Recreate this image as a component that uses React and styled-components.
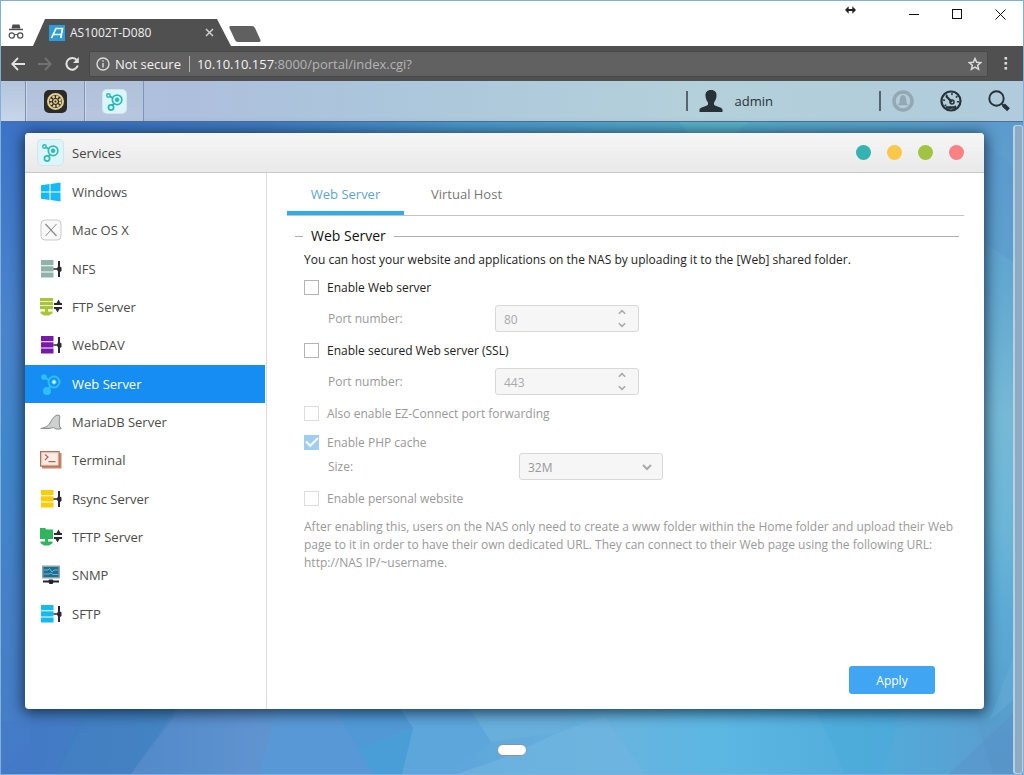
import { useState } from 'react';
import styled, { createGlobalStyle } from 'styled-components';

const services = [
  { name: 'Windows', icon: <WindowsIcon /> },
  { name: 'Mac OS X', icon: <MacIcon /> },
  { name: 'NFS', icon: <RackIcon color="#8fb3a9" /> },
  { name: 'FTP Server', icon: <TransferIcon color="#a9c438" /> },
  { name: 'WebDAV', icon: <RackIcon color="#7719aa" /> },
  { name: 'Web Server', icon: <NodesIcon color="#2cc0fb" size={22} filled /> },
  { name: 'MariaDB Server', icon: <SealIcon /> },
  { name: 'Terminal', icon: <TerminalIcon /> },
  { name: 'Rsync Server', icon: <RackIcon color="#f8cd0c" /> },
  { name: 'TFTP Server', icon: <TransferIcon color="#2fb55d" folder /> },
  { name: 'SNMP', icon: <MonitorIcon /> },
  { name: 'SFTP', icon: <RackIcon color="#18b9f2" /> },
];

function App() {
  const [service, setService] = useState('Web Server');
  const [tab, setTab] = useState('Web Server');
  const [checks, setChecks] = useState({ http: false, ssl: false });

  const handleCheck = (e) => {
    const { name, checked } = e.target;
    setChecks({
      ...checks,
      [name]: checked,
    });
  };

  return (
    <StBrowser>
      <GlobalStyle />
      <BrowserHeader />
      <TopBar />
      <StDesktop>
        <Wallpaper />
        <StWindow>
          <StWindowHeader>
            <StTile size={25}>
              <NodesIcon color="#35b9b4" size={19} />
            </StTile>
            <StWindowTitle>Services</StWindowTitle>
            <StDot type="button" color="#33b3b1" aria-label="Help" />
            <StDot type="button" color="#fac748" aria-label="Minimize" />
            <StDot type="button" color="#a1c440" aria-label="Maximize" />
            <StDot type="button" color="#fa8083" aria-label="Close" />
          </StWindowHeader>
          <StWindowBody>
            <StSidebar>
              {services.map(({ name, icon }) => (
                <li key={name}>
                  <StService
                    type="button"
                    $active={name === service}
                    onClick={() => setService(name)}
                  >
                    {icon}
                    {name}
                  </StService>
                </li>
              ))}
            </StSidebar>
            <StContent>
              <StTabs role="tablist">
                {['Web Server', 'Virtual Host'].map((name) => (
                  <StTab
                    key={name}
                    type="button"
                    role="tab"
                    aria-selected={name === tab}
                    $active={name === tab}
                    onClick={() => setTab(name)}
                  >
                    {name}
                  </StTab>
                ))}
              </StTabs>
              <StSection>
                <StSectionTitle>Web Server</StSectionTitle>
                <StForm id="webServer" onSubmit={(e) => e.preventDefault()}>
                  <StText>
                    You can host your website and applications on the NAS by uploading it to the
                    [Web] shared folder.
                  </StText>
                  <StCheckRow>
                    <StCheck
                      type="checkbox"
                      name="http"
                      checked={checks.http}
                      onChange={handleCheck}
                    />
                    Enable Web server
                  </StCheckRow>
                  <PortField id="httpPort" port="80" disabled={!checks.http} />
                  <StCheckRow>
                    <StCheck
                      type="checkbox"
                      name="ssl"
                      checked={checks.ssl}
                      onChange={handleCheck}
                    />
                    Enable secured Web server (SSL)
                  </StCheckRow>
                  <PortField id="sslPort" port="443" disabled={!checks.ssl} />
                  <StCheckRow $disabled>
                    <StCheck type="checkbox" disabled />
                    Also enable EZ-Connect port forwarding
                  </StCheckRow>
                  <StCheckRow $disabled $compact>
                    <StCheck type="checkbox" defaultChecked disabled />
                    Enable PHP cache
                  </StCheckRow>
                  <StField $labelWidth={191}>
                    <label htmlFor="cacheSize">Size:</label>
                    <StControl>
                      <StSelect id="cacheSize" disabled>
                        <option>32M</option>
                      </StSelect>
                      <StSelectArrow viewBox="0 0 12 8">
                        <path d="M2 2l4 4 4-4" />
                      </StSelectArrow>
                    </StControl>
                  </StField>
                  <StCheckRow $disabled>
                    <StCheck type="checkbox" disabled />
                    Enable personal website
                  </StCheckRow>
                  <StText $disabled>
                    After enabling this, users on the NAS only need to create a www folder within
                    the Home folder and upload their Web page to it in order to have their own
                    dedicated URL. They can connect to their Web page using the following URL:
                    http://NAS IP/~username.
                  </StText>
                </StForm>
              </StSection>
              <StApply type="submit" form="webServer">
                Apply
              </StApply>
            </StContent>
          </StWindowBody>
        </StWindow>
        <StScrollbar />
        <StPager type="button" aria-label="Page 1" />
      </StDesktop>
    </StBrowser>
  );
}

export default App;

function BrowserHeader() {
  return (
    <>
      <StTitleBar>
        <StIncognito viewBox="0 0 16 18">
          <path d="M4.5 1.5h7l1 4h-9z" fill="#4c4c4c" />
          <path d="M1 6.5h14" stroke="#4c4c4c" strokeWidth="1.4" />
          <g fill="none" stroke="#4c4c4c" strokeWidth="1.2">
            <circle cx="3.8" cy="12.5" r="2.6" />
            <circle cx="12.2" cy="12.5" r="2.6" />
            <path d="M6.4 12q1.6-1 3.2 0" />
          </g>
        </StIncognito>
        <StBrowserTab>
          <svg width="16" height="16" viewBox="0 0 16 16">
            <rect width="16" height="16" fill="#2a9ddf" />
            <path
              d="M2.5 13L7 3.5h6.5L11.8 13M4.5 9.5h7.5"
              fill="none"
              stroke="#fff"
              strokeWidth="1.7"
            />
          </svg>
          <StTabName>AS1002T-D080</StTabName>
          <StIconButton type="button" aria-label="Close tab">
            <svg width="9" height="9" viewBox="0 0 9 9" stroke="#d0d0d0" strokeWidth="1.5">
              <path d="M1 1l7 7M8 1L1 8" />
            </svg>
          </StIconButton>
        </StBrowserTab>
        <StNewTab type="button" aria-label="New tab">
          <svg width="32" height="16" viewBox="0 0 32 16">
            <path d="M1.5 0H23q2 0 3 2l5.5 12q.5 2-1.500 2H9q-2 0-3-2L.5 2Q0 0 1.500 0z" fill="#606060" />
          </svg>
        </StNewTab>
        <StWindowButtons>
          <svg width="11" height="8" viewBox="0 0 12 8">
            <path d="M0 4l4-4v3h4V0l4 4-4 4V5H4v3z" fill="#222" />
          </svg>
          <StIconButton type="button" aria-label="Minimize window">
            <svg width="11" height="11" viewBox="0 0 11 11" stroke="#111">
              <path d="M0 5.5h10" />
            </svg>
          </StIconButton>
          <StIconButton type="button" aria-label="Maximize window">
            <svg width="11" height="11" viewBox="0 0 11 11" stroke="#111" fill="none">
              <rect x=".5" y=".5" width="9" height="9" />
            </svg>
          </StIconButton>
          <StIconButton type="button" aria-label="Close window">
            <svg width="11" height="11" viewBox="0 0 11 11" stroke="#111">
              <path d="M.5 .5l10 10M10.5 .5l-10 10" />
            </svg>
          </StIconButton>
        </StWindowButtons>
      </StTitleBar>
      <StToolbar>
        <StIconButton type="button" aria-label="Back">
          <svg width="14" height="14" viewBox="0 0 14 14" stroke="#e2e2e2" strokeWidth="1.8" fill="none">
            <path d="M14 7H1.5M7 1L1.2 7 7 13" />
          </svg>
        </StIconButton>
        <StIconButton type="button" aria-label="Forward">
          <svg width="14" height="14" viewBox="0 0 14 14" stroke="#727272" strokeWidth="1.8" fill="none">
            <path d="M0 7h12.5M7 1l5.8 6L7 13" />
          </svg>
        </StIconButton>
        <StIconButton type="button" aria-label="Reload">
          <svg width="14" height="14" viewBox="0 0 14 14" stroke="#e2e2e2" strokeWidth="2" fill="none">
            <path d="M12 3.5A5.8 5.8 0 1 0 12.8 8.5" />
            <path d="M13.8 0v6H8z" fill="#e2e2e2" stroke="none" />
          </svg>
        </StIconButton>
        <StAddress>
          <svg width="14" height="14" viewBox="0 0 14 14" stroke="#dcdcdc" strokeWidth="1.4" fill="none">
            <circle cx="7" cy="7" r="6" />
            <path d="M7 6v4.5M7 3.3v1.5" />
          </svg>
          <StSecure>Not secure</StSecure>
          <StUrl>
            <b>10.10.10.157</b>:8000/portal/index.cgi?
          </StUrl>
          <StIconButton type="button" aria-label="Bookmark">
            <svg width="14" height="14" viewBox="0 0 14 14" stroke="#dcdcdc" strokeWidth="1.5" fill="none">
              <path d="M7 1.5l1.7 3.7 4 .4-3 2.7.9 4L7 10.2l-3.6 2.100.9-4-3-2.7 4-.4z" />
            </svg>
          </StIconButton>
        </StAddress>
        <StIconButton type="button" aria-label="Menu">
          <svg width="4" height="13" viewBox="0 0 4 13" fill="#dcdcdc">
            <rect x=".5" width="2.6" height="2.6" />
            <rect x=".5" y="5" width="2.6" height="2.6" />
            <rect x=".5" y="10" width="2.6" height="2.6" />
          </svg>
        </StIconButton>
      </StToolbar>
    </>
  );
}

function TopBar() {
  return (
    <StTopBar>
      <StShowDesktop type="button" aria-label="Show desktop" />
      <StTask type="button" aria-label="Settings">
        <svg width="23" height="23" viewBox="0 0 23 23" fill="none">
          <rect width="23" height="23" rx="5" fill="#2c2a26" />
          <circle cx="11.5" cy="11.5" r="7.5" stroke="#e3cf93" strokeWidth="2" />
          <circle cx="11.5" cy="11.5" r="4.8" stroke="#e3cf93" strokeWidth="2.4" strokeDasharray="2.4 1.37" />
          <circle cx="11.5" cy="11.5" r="2.4" fill="#e3cf93" />
          <circle cx="11.5" cy="11.5" r="1" fill="#2c2a26" />
        </svg>
      </StTask>
      <StTask type="button" aria-label="Services">
        <StTile size={23}>
          <NodesIcon color="#28b9b4" size={19} />
        </StTile>
      </StTask>
      <StUser type="button">
        <svg width="24" height="22" viewBox="0 0 24 22">
          <path
            d="M12 0c4 0 5.8 2.5 5.5 6-.2 3-1.3 5-2.5 6.500v2c1 2 7.5 2 8.5 5V22H.5v-2.500c1-3 7.5-3 8.500-5v-2C7.8 11 6.7 9 6.5 6 6.2 2.5 8 0 12 0z"
            fill="#263238"
          />
        </svg>
        admin
      </StUser>
      <StTools>
        <StIconButton type="button" aria-label="Notifications">
          <svg width="22" height="22" viewBox="0 0 22 22" fill="none">
            <circle cx="11" cy="11" r="9" stroke="#93a8b2" strokeWidth="3.5" />
            <path d="M11 5c2.2 0 3 2.2 3.2 4.5L14.5 13l2 2.200h-11L7.5 13l.3-3.500C8 7.2 8.8 5 11 5z" fill="#93a8b2" />
          </svg>
        </StIconButton>
        <StIconButton type="button" aria-label="Activity monitor">
          <svg width="22" height="22" viewBox="0 0 22 22" fill="none" stroke="#263238">
            <circle cx="11" cy="11" r="9.5" strokeWidth="2.2" />
            <circle cx="11" cy="11" r="7" strokeWidth="2" strokeDasharray="1.5 4" />
            <path d="M6 6l6 6" strokeWidth="2.2" />
            <circle cx="12" cy="12" r="2" strokeWidth="1.5" />
            <path d="M6 17.5h10" strokeWidth="2.5" />
          </svg>
        </StIconButton>
        <StIconButton type="button" aria-label="Search">
          <svg width="22" height="22" viewBox="0 0 22 22" fill="none" stroke="#263238">
            <circle cx="8.5" cy="8.5" r="7.2" strokeWidth="1.9" />
            <path d="M14 14l2 2" strokeWidth="2" />
            <path d="M15.5 15l5 4.8" strokeWidth="4" />
          </svg>
        </StIconButton>
      </StTools>
    </StTopBar>
  );
}

function PortField({ id, port, disabled }) {
  const [value, setValue] = useState(port);

  return (
    <StField $labelWidth={167}>
      <label htmlFor={id}>Port number:</label>
      <StControl>
        <StInput
          id={id}
          type="text"
          value={value}
          onChange={(e) => setValue(e.target.value)}
          disabled={disabled}
        />
        <StSpinner>
          <button
            type="button"
            aria-label="Increase"
            disabled={disabled}
            onClick={() => setValue(String(Number(value) + 1))}
          >
            <svg width="8" height="6" viewBox="0 0 8 6">
              <path d="M.8 4.8L4 1.6l3.2 3.2" />
            </svg>
          </button>
          <button
            type="button"
            aria-label="Decrease"
            disabled={disabled}
            onClick={() => setValue(String(Number(value) - 1))}
          >
            <svg width="8" height="6" viewBox="0 0 8 6">
              <path d="M.8 1.2L4 4.4l3.2-3.2" />
            </svg>
          </button>
        </StSpinner>
      </StControl>
    </StField>
  );
}

function Wallpaper() {
  return (
    <StWallpaper viewBox="0 0 1024 653" preserveAspectRatio="none">
      <defs>
        <linearGradient id="sky" x1="0" x2="1" y1="0" y2="0">
          <stop offset="0" stopColor="#4379c6" />
          <stop offset=".15" stopColor="#4785c5" />
          <stop offset=".25" stopColor="#5c94d0" />
          <stop offset=".45" stopColor="#5ea6db" />
          <stop offset=".6" stopColor="#67b4df" />
          <stop offset=".7" stopColor="#5cb7e3" />
          <stop offset=".85" stopColor="#51acdb" />
          <stop offset="1" stopColor="#5c9bcd" />
        </linearGradient>
        <linearGradient id="topEdge" x1="0" x2="1" y1="0" y2="0">
          <stop offset="0" stopColor="#3a70c4" />
          <stop offset=".25" stopColor="#3f7ac0" />
          <stop offset=".45" stopColor="#4c98cb" />
          <stop offset=".7" stopColor="#55acc9" />
          <stop offset="1" stopColor="#5c9bcd" />
        </linearGradient>
        <linearGradient id="leftEdge" x1="0" x2="0" y1="0" y2="1">
          <stop offset="0" stopColor="#3c73c6" />
          <stop offset=".3" stopColor="#4a83cc" />
          <stop offset=".5" stopColor="#3f86cb" />
          <stop offset=".75" stopColor="#4780c6" />
          <stop offset="1" stopColor="#457cc8" />
        </linearGradient>
        <linearGradient id="rightEdge" x1="0" x2="0" y1="0" y2="1">
          <stop offset="0" stopColor="#5c9bcd" />
          <stop offset=".25" stopColor="#62a8d0" />
          <stop offset=".45" stopColor="#76b9d6" />
          <stop offset=".62" stopColor="#6cb5d7" />
          <stop offset=".75" stopColor="#5caad5" />
          <stop offset="1" stopColor="#5598c9" />
        </linearGradient>
      </defs>
      <rect width="1024" height="653" fill="url(#sky)" />
      <path d="M0 0h1024v30H0z" fill="url(#topEdge)" />
      <path d="M0 0h30v620L0 653z" fill="url(#leftEdge)" />
      <path d="M680 0h70l-20 14h-40z" fill="#5cb8c8" opacity=".6" />
      <path d="M975 0h49v653h-30l-19-60z" fill="url(#rightEdge)" />
      <path d="M980 15l34 30v95l-30-20z" fill="#5b96cd" opacity=".4" />
      <path d="M990 600l34-90v60z" fill="#6fb6dd" opacity=".3" />
      <path d="M0 600h85L55 653H0z" fill="#4377c6" opacity=".4" />
      <path d="M85 580h95l-50 73H55z" fill="#3f80bd" opacity=".4" />
      <path d="M185 580h95l-21 73H130z" fill="#6492d0" opacity=".45" />
      <path d="M277 585h57l39 68H259z" fill="#5898d6" />
      <path d="M334 585h64l15 22-56 21z" fill="#5099d6" />
      <path d="M413 607l-11 46h-29l-16-25z" fill="#4a9ed8" />
      <path d="M398 585h70l23 36-45 32h-44l11-46z" fill="#5da6dc" />
      <path d="M468 585h110l-18 26-69 10z" fill="#68afdc" />
      <path d="M500 638l60-27 45-16 40 58H457z" fill="#70b5df" opacity=".7" />
      <path d="M815 585h88l-20 68h-38z" fill="#48a9d9" opacity=".4" />
      <path d="M950 653l74-70v70z" fill="#5b8fc9" opacity=".4" />
    </StWallpaper>
  );
}

function WindowsIcon() {
  return (
    <svg width="22" height="22" viewBox="0 0 22 22" fill="#16b8f5">
      <path d="M1 4.3l8.5-1.3v7.5H1zM10.5 2.9L20.5 1.5v9h-10zM1 11.5h8.5V19L1 17.7zM10.5 11.5h10v9l-10-1.4z" />
    </svg>
  );
}

function MacIcon() {
  return (
    <svg width="22" height="22" viewBox="0 0 22 22" fill="none">
      <rect x="1" y="1" width="20" height="20" rx="4" fill="#f8f8f8" stroke="#c9c9c9" />
      <path d="M5.5 5l11 12" stroke="#8d8d8d" strokeWidth="1.3" />
      <path d="M16.5 5l-11 12" stroke="#8d8d8d" strokeWidth="1" />
    </svg>
  );
}

function RackIcon({ color }) {
  return (
    <svg width="22" height="22" viewBox="0 0 22 22">
      <path d="M1 2h12.5v5.2H1zM1 8.2h12.5v5.2H1zM1 14.4h12.5v5.2H1z" fill={color} />
      <path d="M13.5 10.2h3.5l1-1.7V3h2v5.5l1.5 1v3.5l-1.5 1V19h-2v-5.5l-1-1.7h-3.5z" fill="#2b2733" />
    </svg>
  );
}

function TransferIcon({ color, folder }) {
  return (
    <svg width="22" height="22" viewBox="0 0 22 22">
      {folder ? (
        <path d="M0 2h5l1.5 1.5H13V13H0z" fill={color} />
      ) : (
        <path d="M0 2h13v3.2H0zM0 6h13v3.2H0zM0 10h13v3.2H0z" fill={color} />
      )}
      <path d="M5 13h3v2.5h4.5v1.8L9 19.5H4l-3.5-2.2v-1.8H5z" fill={color} />
      <path d="M14 9V7h2.5l2-3.5L20.5 7H22v2zM14 11h8v2h-2.5l-2 3.5L15.5 13H14z" fill="#2b2b2b" />
    </svg>
  );
}

function SealIcon() {
  return (
    <svg width="22" height="22" viewBox="0 0 22 22">
      <path
        d="M.8 17.5c4-1 7-1.5 9.2-5.5 2-3.8 4-6.5 7-8l2.5.5c.8 2-.3 3.5-.3 6.5l.5 5 1.500 1-.5 1H16l-2.500-1.500-4.500 1z"
        fill="#cfd1d1"
        stroke="#858a8b"
        strokeWidth="1"
      />
    </svg>
  );
}

function TerminalIcon() {
  return (
    <svg width="22" height="22" viewBox="0 0 22 22">
      <path d="M2 4h19.5v15.5H2z" fill="#c8866a" />
      <path d="M.6 2.6h18.5v14.5H.6z" fill="#f5e0d5" stroke="#b0705a" strokeWidth="1.2" />
      <path d="M3 5h13.8v9.8H3z" fill="#faeee7" />
      <path d="M5 5.5L8 8 5 11M8.5 12.6h7" fill="none" stroke="#b0654c" strokeWidth="1.2" />
    </svg>
  );
}

function MonitorIcon() {
  return (
    <svg width="22" height="22" viewBox="0 0 22 22">
      <path d="M2 1.5h18v13H2z" fill="#8aa4b1" />
      <path d="M3.5 3h15v10h-15z" fill="#246b8c" />
      <path d="M4 6h4l1.5-1.5L12 8l2-2h4M4 10h5l2-1 2 1.500h5" fill="none" stroke="#56bfe0" />
      <path d="M3 16.5h5.5l1-1h3l1 1H19v2h-5.5l-1 1.500h-3l-1-1.500H3z" fill="#22262b" />
    </svg>
  );
}

function NodesIcon({ color, size, filled }) {
  return (
    <svg width={size} height={size} viewBox="0 0 22 22" fill="none" stroke={color}>
      <circle cx="14" cy="9" r="5.5" strokeWidth="2" />
      <circle cx="14" cy="9" r="2.2" fill={filled ? '#e8f8ff' : color} strokeWidth="1" />
      <circle cx="4" cy="4" r="2" fill={filled ? color : 'none'} strokeWidth="1.7" />
      <circle cx="7" cy="18" r="3" fill={filled ? color : 'none'} strokeWidth="2" />
      <path d="M5.8 5l3.2 2M8.5 15.5l2.5-2.8" strokeWidth="2" />
    </svg>
  );
}

const GlobalStyle = createGlobalStyle`
  * {
    box-sizing: border-box;
  }
  body {
    margin: 0;
    font-family: 'Open Sans', 'Noto Sans', sans-serif;
    font-size: 12px;
    color: #222;
  }
  button, input, select {
    font: inherit;
  }
  svg {
    flex: none;
  }
`;

const StBrowser = styled.div`
  display: flex;
  flex-direction: column;
  min-height: 100vh;
  border: 1px solid #7fb0dc;
`;

const StTitleBar = styled.header`
  display: flex;
  align-items: flex-end;
  height: 45px;
  padding-left: 7px;
  background: #fff;
`;

const StIncognito = styled.svg`
  width: 16px;
  height: 18px;
  margin-bottom: 5px;
`;

const StBrowserTab = styled.div`
  display: flex;
  align-items: center;
  width: 198px;
  height: 27px;
  margin-left: 9px;
  padding: 0 17px 0 16px;
  background: #505050;
  clip-path: polygon(12px 0, 184px 0, 100% 100%, 0 100%);
`;

const StTabName = styled.span`
  flex: 1;
  margin-left: 5px;
  color: #f0f0f0;
`;

const StIconButton = styled.button`
  display: flex;
  align-items: center;
  justify-content: center;
  padding: 0;
  border: none;
  background: none;
`;

const StNewTab = styled(StIconButton)`
  margin-bottom: 4px;
  margin-left: -2px;
`;

const StWindowButtons = styled.div`
  display: flex;
  align-self: flex-start;
  align-items: center;
  gap: 32px;
  margin-left: auto;
  padding: 5px 17px 0 0;
  > svg {
    margin: 0 21px 8px 0;
  }
`;

const StToolbar = styled.nav`
  display: flex;
  align-items: center;
  gap: 13px;
  height: 35px;
  padding: 0 15px 0 10px;
  background: #505050;
`;

const StAddress = styled.div`
  display: flex;
  flex: 1;
  align-items: center;
  height: 26px;
  margin-right: 3px;
  margin-left: -3px;
  padding: 0 5px 0 6px;
  border: 1px solid #484848;
  border-radius: 2px;
  background: #616161;
  color: #f2f2f2;
  font-size: 13px;
`;

const StSecure = styled.span`
  margin: 0 8px 0 5px;
`;

const StUrl = styled.span`
  flex: 1;
  padding-left: 7px;
  border-left: 1px solid #b5b5b5;
  color: #b4b4b4;
  line-height: 16px;
  b {
    color: #f2f2f2;
    font-weight: 400;
  }
`;

const StTopBar = styled.nav`
  display: flex;
  align-items: center;
  height: 41px;
  border-bottom: 1px solid #50718f;
  background: linear-gradient(90deg, #b3c4df 0%, #aebfdd 18%, #abc5dc 35%, #b4d0da 68%, #b0cbdb 100%);
`;

const StShowDesktop = styled.button`
  align-self: stretch;
  width: 25px;
  border: none;
  border-right: 1px solid #7c90ac;
  background: linear-gradient(#b3c4dc, #c8d6ea);
`;

const StTask = styled.button`
  display: flex;
  align-items: center;
  align-self: stretch;
  justify-content: center;
  width: 59px;
  padding: 0;
  border: none;
  border-right: 1px solid #8094b4;
  border-left: 1px solid #cdd9ea;
  background: linear-gradient(#b0c1da, #b9c6e0);
`;

const StTile = styled.span`
  display: flex;
  align-items: center;
  justify-content: center;
  width: ${(props) => props.size}px;
  height: ${(props) => props.size}px;
  border-radius: 4px;
  background: #dcf5f8;
  box-shadow: 0 0 0 1px #cfe6ec;
`;

const StUser = styled.button`
  display: flex;
  align-items: center;
  gap: 12px;
  height: 20px;
  margin-left: auto;
  padding: 0 0 0 11px;
  border: none;
  border-left: 2px solid #55646e;
  background: none;
  color: #263238;
  font-size: 13px;
`;

const StTools = styled.div`
  display: flex;
  align-items: center;
  gap: 26px;
  height: 20px;
  margin-right: 13px;
  margin-left: 106px;
  padding-left: 11px;
  border-left: 2px solid #55646e;
`;

const StDesktop = styled.main`
  position: relative;
  display: grid;
  flex: 1;
  grid-template-columns: 1fr 10px;
  grid-template-rows: 1fr 65px;
  column-gap: 29px;
  padding: 11px 0 0 24px;
  isolation: isolate;
`;

const StWallpaper = styled.svg`
  position: absolute;
  inset: 0;
  z-index: -1;
  width: 100%;
  height: 100%;
`;

const StWindow = styled.section`
  display: flex;
  flex-direction: column;
  overflow: hidden;
  border-radius: 4px;
  background: #fff;
  box-shadow: 0 2px 14px 2px rgba(10, 30, 50, 0.75);
`;

const StWindowHeader = styled.div`
  display: flex;
  align-items: center;
  gap: 16px;
  height: 40px;
  padding: 0 20px 0 13px;
  border-bottom: 1px solid #c8c8c8;
  background: linear-gradient(#f6f6f6, #e9e9e9);
`;

const StWindowTitle = styled.h1`
  flex: 1;
  margin: 0 0 0 -7px;
  color: #444;
  font-size: 13px;
  font-weight: 400;
`;

const StDot = styled.button`
  width: 15px;
  height: 15px;
  padding: 0;
  border: none;
  border-radius: 50%;
  background: ${(props) => props.color};
`;

const StWindowBody = styled.div`
  display: grid;
  flex: 1;
  grid-template-columns: 241px 1fr;
`;

const StSidebar = styled.ul`
  display: grid;
  grid-template-rows: repeat(12, 1fr);
  height: 460px;
  margin: 0;
  padding: 0;
  list-style: none;
`;

const StService = styled.button`
  display: flex;
  align-items: center;
  gap: 10px;
  width: 240px;
  height: 100%;
  padding: 0 15px;
  border: none;
  background: ${(props) => (props.$active ? '#168df2' : 'transparent')};
  color: ${(props) => (props.$active ? '#fff' : '#4c4c4c')};
  font-size: 13px;
`;

const StContent = styled.div`
  display: flex;
  flex-direction: column;
  padding: 0 20px 15px;
  border-left: 1px solid #dcdcdc;
`;

const StTabs = styled.div`
  display: flex;
  border-bottom: 1px solid #c4c4c4;
`;

const StTab = styled.button`
  position: relative;
  width: 117px;
  height: 42px;
  padding: 4px 0 0;
  border: none;
  border-bottom: 4px solid ${(props) => (props.$active ? '#2fadea' : 'transparent')};
  background: none;
  color: ${(props) => (props.$active ? '#5fa3cf' : '#777')};
  font-size: 13px;
  & + & {
    margin-left: 4px;
  }
  & + &::before {
    content: '';
    position: absolute;
    top: 10px;
    left: -1px;
    height: 21px;
    border-left: 1px solid #ccc;
  }
`;

const StSection = styled.section`
  padding: 10px 5px 0 8px;
`;

const StSectionTitle = styled.h2`
  display: flex;
  align-items: center;
  gap: 8px;
  margin: 0;
  color: #111;
  font-size: 14px;
  font-weight: 400;
  line-height: 20px;
  &::before,
  &::after {
    content: '';
    width: 8px;
    height: 1px;
    background: #b0b0b0;
  }
  &::after {
    flex: 1;
  }
`;

const StForm = styled.form`
  padding: 5px 0 0 9px;
`;

const StText = styled.p`
  margin: ${(props) => (props.$disabled ? '2px 0 0' : '0')};
  color: ${(props) => (props.$disabled ? '#999' : '#222')};
  line-height: 18px;
`;

const StCheckRow = styled.label`
  display: flex;
  align-items: center;
  gap: 8px;
  height: ${(props) => (props.$compact ? '22px' : '36px')};
  color: ${(props) => (props.$disabled ? '#999' : '#222')};
`;

const StCheck = styled.input`
  display: grid;
  width: 15px;
  height: 15px;
  margin: 0;
  border: 1px solid #b4b4b4;
  background: #fff;
  appearance: none;
  place-content: center;
  &:disabled {
    border-color: #ddd;
  }
  &:checked {
    border-color: #9fcef0;
    background: #9fcef0;
  }
  &:checked::before {
    content: '';
    width: 10px;
    height: 5px;
    margin-bottom: 3px;
    border: solid #fff;
    border-width: 0 0 2px 2px;
    transform: rotate(-45deg);
  }
`;

const StField = styled.div`
  display: grid;
  align-items: center;
  grid-template-columns: ${(props) => props.$labelWidth}px 144px;
  height: 27px;
  padding-left: 24px;
  color: #999;
`;

const StControl = styled.div`
  position: relative;
  height: 27px;
`;

const StInput = styled.input`
  width: 100%;
  height: 100%;
  padding: 2px 24px 0 8px;
  border: 1px solid #d8d8d8;
  border-radius: 3px;
  background: #f6f6f6;
  color: #aaa;
`;

const StSpinner = styled.div`
  position: absolute;
  top: 1px;
  right: 13px;
  bottom: 1px;
  display: grid;
  button {
    display: grid;
    padding: 0;
    border: none;
    background: none;
    place-items: center;
  }
  path {
    fill: none;
    stroke: #aaa;
    stroke-width: 1.6;
  }
`;

const StSelect = styled.select`
  width: 100%;
  height: 100%;
  padding: 2px 24px 0 8px;
  border: 1px solid #d8d8d8;
  border-radius: 3px;
  background: #f6f6f6;
  color: #999;
  opacity: 1;
  appearance: none;
`;

const StSelectArrow = styled.svg`
  position: absolute;
  top: 10px;
  right: 10px;
  width: 12px;
  height: 8px;
  fill: none;
  stroke: #aaa;
  stroke-width: 2;
  pointer-events: none;
`;

const StApply = styled.button`
  align-self: flex-end;
  width: 86px;
  height: 28px;
  margin-top: auto;
  margin-right: 29px;
  border: none;
  border-radius: 3px;
  background: #40a6f3;
  color: #fff;
`;

const StScrollbar = styled.div`
  grid-row: 1 / 3;
  grid-column: 2;
  margin-top: -8px;
  border: 1px solid #b5d2e4;
  border-left-width: 2px;
  border-radius: 3px;
  background: #8fabc2;
`;

const StPager = styled.button`
  grid-row: 2;
  grid-column: 1;
  width: 30px;
  height: 12px;
  margin: 35px 0 0 472px;
  padding: 0;
  border: 1px solid #7d98a8;
  border-radius: 6px;
  background: #fff;
`;
